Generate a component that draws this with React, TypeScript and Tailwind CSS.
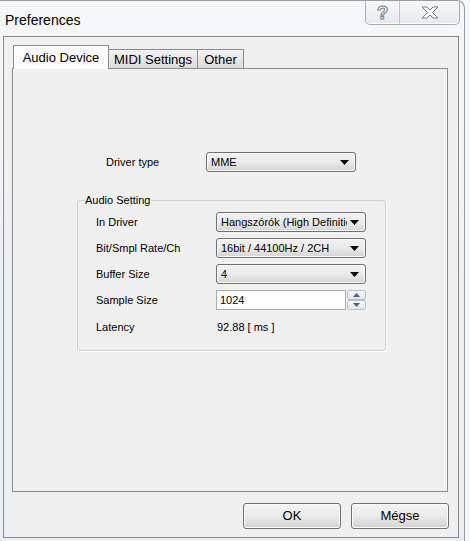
import React from "react";

function Combo({ value, className = "" }: { value: string; className?: string }) {
  return (
    <div
      className={`flex h-[20px] items-center rounded-[3px] border border-[#707070] bg-linear-to-b from-[#f3f3f3] via-[#ebebeb] to-[#d4d4d4] pl-[4px] pr-[6px] shadow-[inset_0_0_0_1px_#fafafa] ${className}`}
    >
      <span className="flex-1 overflow-hidden whitespace-nowrap text-[11px] leading-[14px] text-black">
        {value}
      </span>
      <svg width="9" height="5" viewBox="0 0 9 5" className="ml-[3px] shrink-0">
        <path d="M0 0h9L4.5 5z" fill="#000" />
      </svg>
    </div>
  );
}

function Row({ label, children }: { label: string; children: React.ReactNode }) {
  return (
    <div className="flex h-[20px] items-center">
      <span className="w-[120px] text-[11px] leading-[14px] text-black">{label}</span>
      {children}
    </div>
  );
}

function SpinHalf({ up }: { up?: boolean }) {
  return (
    <div className="flex h-[10px] items-center justify-center rounded-[2px] border border-[#b9c2cc] bg-linear-to-b from-[#f6f8fa] to-[#e2e7ec]">
      <svg width="7" height="4" viewBox="0 0 7 4">
        <path d={up ? "M0 4h7L3.5 0z" : "M0 0h7L3.5 4z"} fill="#4d6185" />
      </svg>
    </div>
  );
}

function DlgButton({ label }: { label: string }) {
  return (
    <button className="h-[26px] w-[98px] rounded-[3px] border border-[#707070] bg-linear-to-b from-[#f4f4f4] via-[#ebebeb] to-[#d2d2d2] text-[13px] leading-[16px] text-black shadow-[inset_0_0_0_1px_#fbfbfb]">
      {label}
    </button>
  );
}

export default function App() {
  return (
    <div className="h-[541px] w-[470px] overflow-hidden bg-[#f7f8f9] font-['Liberation_Sans',Arial,sans-serif]">
      <div className="h-[541px] w-[465px] rounded-tr-[8px] border-r border-t border-[#9a9fa5] bg-linear-to-b from-[#f6f7f9] via-[#eef1f4] to-[#eceff2]">
        {/* title bar */}
        <div className="flex h-[35px] items-start justify-between">
          <span className="pl-[5px] pt-[11px] text-[14px] leading-[16px] text-black">Preferences</span>
          <div className="mr-[4px] flex h-[24px] rounded-b-[5px] border border-t-0 border-[#a9afb5] bg-linear-to-b from-[#f7f9fa] to-[#e6eaee] shadow-[inset_0_-1px_0_#fdfdfd]">
            <div className="flex w-[34px] items-center justify-center border-r border-[#c2c7cc]">
              <span className="text-[19px] font-bold leading-[20px] text-white [-webkit-text-stroke:1px_#7b7f84]">?</span>
            </div>
            <div className="flex w-[59px] items-center justify-center">
              <svg width="18" height="13" viewBox="0 0 18 13">
                <path
                  d="M1 1h5l3 3 3-3h5l-5.5 5.5L17 12h-5l-3-3-3 3H1l5.5-5.5z"
                  fill="#fff"
                  stroke="#7b7f84"
                  strokeWidth="1"
                  strokeLinejoin="round"
                />
              </svg>
            </div>
          </div>
        </div>

        {/* client area */}
        <div className="ml-[3px] h-[502px] w-[456px] border border-[#8a8a8a] bg-[#f0f0f0] pl-[8px] pt-[8px]">
          {/* tabs */}
          <div className="flex h-[23px] items-end">
            <div className="relative z-10 -mb-px ml-[1px] flex h-[24px] w-[96px] items-center justify-center border border-b-0 border-[#898c95] bg-[#fcfcfc] text-[13px] leading-[16px] text-black">
              Audio Device
            </div>
            <div className="flex h-[19px] w-[89px] items-center justify-center border border-b-0 border-l-0 border-[#898c95] bg-linear-to-b from-[#f2f2f2] to-[#dcdcdc] pt-[1px] text-[13px] leading-[16px] text-black">
              MIDI Settings
            </div>
            <div className="flex h-[19px] w-[46px] items-center justify-center border border-b-0 border-l-0 border-[#898c95] bg-linear-to-b from-[#f2f2f2] to-[#dcdcdc] pt-[1px] text-[13px] leading-[16px] text-black">
              Other
            </div>
          </div>

          {/* panel */}
          <div className="h-[424px] w-[436px] border border-[#898c95] bg-[#f0f0f0] pt-[83px]">
            <div className="flex h-[20px] items-center pl-[93px]">
              <span className="w-[100px] text-[11px] leading-[14px] text-black">Driver type</span>
              <Combo value="MME" className="w-[150px]" />
            </div>

            <div className="relative ml-[64px] mt-[28px] w-[309px] rounded-[3px] border border-[#d2d2d2] pb-[13px] pl-[18px] pt-[11px] shadow-[1px_1px_0_#ffffff]">
              <span className="absolute left-[6px] top-[-8px] bg-[#f0f0f0] px-[1px] text-[11px] leading-[14px] text-black">
                Audio Setting
              </span>
              <div className="flex flex-col gap-[6px]">
                <Row label="In Driver">
                  <Combo value="Hangszórók (High Definition Audio)" className="w-[150px]" />
                </Row>
                <Row label="Bit/Smpl Rate/Ch">
                  <Combo value="16bit / 44100Hz / 2CH" className="w-[150px]" />
                </Row>
                <Row label="Buffer Size">
                  <Combo value="4" className="w-[150px]" />
                </Row>
                <Row label="Sample Size">
                  <div className="flex h-[20px] w-[130px] items-center border border-[#abadb3] bg-white pl-[3px] text-[11px] leading-[14px] text-black">
                    1024
                  </div>
                  <div className="ml-[1px] flex w-[19px] flex-col">
                    <SpinHalf up />
                    <SpinHalf />
                  </div>
                </Row>
                <div className="mt-[1px]">
                  <Row label="Latency">
                    <span className="pl-[1px] text-[11px] leading-[14px] text-black">92.88 [ ms ]</span>
                  </Row>
                </div>
              </div>
            </div>
          </div>

          {/* buttons */}
          <div className="mt-[11px] flex w-[437px] justify-end gap-[10px]">
            <DlgButton label="OK" />
            <DlgButton label="Mégse" />
          </div>
        </div>
      </div>
    </div>
  );
}
